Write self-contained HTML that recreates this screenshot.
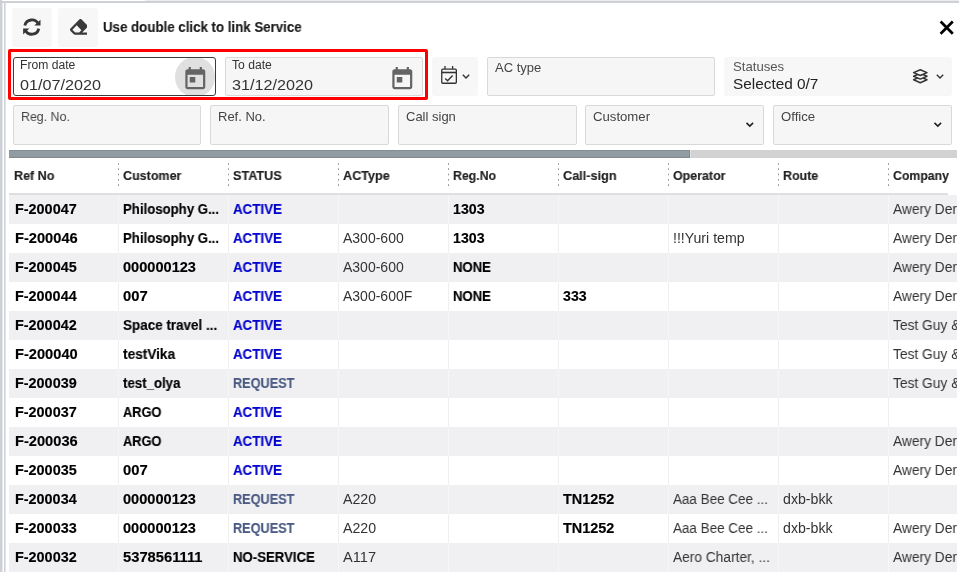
<!DOCTYPE html>
<html><head><meta charset="utf-8">
<style>
*{box-sizing:border-box;margin:0;padding:0}
html,body{width:959px;height:572px;overflow:hidden;background:#fff;font-family:"Liberation Sans",sans-serif;color:#222}
.a{position:absolute}
.t{position:absolute;white-space:nowrap;line-height:1;transform-origin:0 0;will-change:transform}
.btn{position:absolute;background:#f7f7f7;border-radius:3px}
.fld{position:absolute;background:#f6f6f6;border:1px solid #d9d9d9;border-radius:2px}
.row{position:absolute;left:9px;width:948px;height:29px}
.g{background:#f0f0f3}
.vl{position:absolute;top:195px;width:1px;height:377px;background:#f2f2f4}
.hd{position:absolute;top:163px;width:1px;height:23px;background-image:linear-gradient(#999 0,#999 2px,transparent 2px);background-size:1px 5.3px}
</style></head><body>
<div class="a" style="left:145px;top:0;width:814px;height:1px;background:#ececec"></div><div class="a" style="left:0;top:1px;width:959px;height:2px;background:#cdd1d6"></div>
<div class="a" style="left:0;top:0;width:2px;height:572px;background:#cdd1d6"></div><div class="a" style="left:2px;top:3px;width:1px;height:569px;background:#e6e8eb"></div>
<div class="a" style="left:4px;top:3px;width:1px;height:569px;background:#cfd3d7"></div><div class="a" style="left:5px;top:3px;width:1px;height:569px;background:#e0e3e6"></div>

<div class="btn" style="left:12px;top:8px;width:40px;height:39px"></div>
<div class="btn" style="left:58px;top:8px;width:40px;height:39px"></div>
<svg class="a" style="left:0;top:0" width="50" height="45" viewBox="0 0 50 45"><g fill="#363636"><path d="M24.82 25.57A7.15 7.15 0 0 1 38.28 24.08" fill="none" stroke="#363636" stroke-width="2.8"/><path d="M40.5 19.7L40.5 25.6L34.3 25.6Z"/><path d="M38.78 28.63A7.15 7.15 0 0 1 25.32 30.12" fill="none" stroke="#363636" stroke-width="2.8"/><path d="M23.1 34.5L23.1 28.6L29.3 28.6Z"/></g></svg>
<svg class="a" style="left:69.6px;top:19.1px" width="17.6" height="15.8" viewBox="0 0 512 446" preserveAspectRatio="none"><g transform="translate(0,-34)"><path fill="#3a3a3a" d="M497.941 273.941c18.745-18.745 18.745-49.137 0-67.882l-160-160c-18.745-18.745-49.136-18.746-67.883 0l-256 256c-18.745 18.745-18.745 49.137 0 67.882l96 96A48.004 48.004 0 0 0 144 480h356c6.627 0 12-5.373 12-12v-40c0-6.627-5.373-12-12-12H355.883l142.058-142.059zm-302.627-62.627l137.373 137.373L265.373 416H150.628l-80-80 124.686-124.686z"/></g></svg>
<svg class="a" style="left:938px;top:19px" width="18" height="18" viewBox="0 0 18 18"><path d="M2.6 2.55L14.8 14.75M14.8 2.55L2.6 14.75" stroke="#000" stroke-width="2.7"/></svg>

<div class="a" style="left:8px;top:49px;width:420px;height:51px;border:3px solid #ff0000;border-radius:2px"></div>
<div class="a" style="left:13px;top:57px;width:203px;height:39px;border:1px solid #3c3c3c;border-radius:3px;background:#fff;overflow:hidden">
  <div class="a" style="left:161px;top:-1px;width:40px;height:40px;border-radius:50%;background:#e0e0e0"></div>
</div>
<svg class="a" style="left:181.8px;top:65.9px" width="26.6" height="26.6" viewBox="0 0 24 24"><path fill="#646464" d="M19 3h-1V1h-2v2H8V1H6v2H5c-1.11 0-1.99.9-1.99 2L3 19c0 1.1.89 2 2 2h14c1.1 0 2-.9 2-2V5c0-1.1-.9-2-2-2zm0 16H5V8h14v11zM7 10h5v5H7z"/></svg>
<div class="fld" style="left:225px;top:57px;width:198px;height:39px"></div>
<svg class="a" style="left:388.7px;top:65.9px" width="26.6" height="26.6" viewBox="0 0 24 24"><path fill="#646464" d="M19 3h-1V1h-2v2H8V1H6v2H5c-1.11 0-1.99.9-1.99 2L3 19c0 1.1.89 2 2 2h14c1.1 0 2-.9 2-2V5c0-1.1-.9-2-2-2zm0 16H5V8h14v11zM7 10h5v5H7z"/></svg>
<div class="btn" style="left:432px;top:57px;width:46px;height:39px"></div>
<svg class="a" style="left:440px;top:65px" width="18" height="20" viewBox="0 0 18 20"><g fill="none" stroke="#333" stroke-width="1.3"><rect x="1.75" y="4.15" width="14.6" height="14.1" rx="1"/><path d="M1.5 7.5H16.5" stroke-width="1.6"/><path d="M5 1.1v3M12.6 1.1v3"/><path d="M5.2 13.4L7.6 15.7L12.6 10.6" stroke-width="1.4"/></g></svg>
<svg class="a" style="left:461px;top:73px" width="10" height="7" viewBox="0 0 10 7"><path d="M1.8 1.7L5 4.9L8.2 1.7" fill="none" stroke="#333" stroke-width="1.4"/></svg>
<div class="fld" style="left:487px;top:57px;width:228px;height:39px"></div>
<div class="btn" style="left:724px;top:57px;width:228px;height:39px"></div>
<svg class="a" style="left:905px;top:60px" width="45" height="32" viewBox="0 0 45 32"><g fill="#f7f7f7" stroke="#333" stroke-width="1.5" stroke-linejoin="round"><path d="M15.3 16.9L22 19.8L15.3 22.7L8.6 19.8Z"/><path d="M15.3 13.3L22 16.2L15.3 19.1L8.6 16.2Z"/><path d="M15.3 9.7L22 12.6L15.3 15.5L8.6 12.6Z"/></g></svg>
<svg class="a" style="left:935px;top:73px" width="10" height="7" viewBox="0 0 10 7"><path d="M1.8 1.7L5 4.9L8.2 1.7" fill="none" stroke="#333" stroke-width="1.4"/></svg>
<div class="fld" style="left:13px;top:105px;width:188px;height:40px"></div>
<div class="fld" style="left:210px;top:105px;width:179px;height:40px"></div>
<div class="fld" style="left:398px;top:105px;width:179px;height:40px"></div>
<div class="fld" style="left:585px;top:105px;width:179px;height:40px"></div>
<svg class="a" style="left:745px;top:121px" width="10" height="7" viewBox="0 0 10 7"><path d="M1.5 1.9L4.8 5.1L8.1 1.9" fill="none" stroke="#222" stroke-width="1.6"/></svg>
<div class="fld" style="left:773px;top:105px;width:179px;height:40px"></div>
<svg class="a" style="left:933px;top:121px" width="10" height="7" viewBox="0 0 10 7"><path d="M1.5 1.9L4.8 5.1L8.1 1.9" fill="none" stroke="#222" stroke-width="1.6"/></svg>
<div class="a" style="left:9px;top:150px;width:948px;height:8px;background:#d2d2d2"></div>
<div class="a" style="left:9px;top:150px;width:681px;height:8px;background:#909ba2;box-shadow:inset 0 1px 0 #838e95,inset 0 -1px 0 #7e8990,inset -1px 0 0 #818c93"></div><div class="a" style="left:690px;top:150px;width:1px;height:8px;background:#dedede"></div>
<div class="hd" style="left:118px"></div><div class="hd" style="left:228px"></div><div class="hd" style="left:338px"></div><div class="hd" style="left:448px"></div><div class="hd" style="left:558px"></div><div class="hd" style="left:668px"></div><div class="hd" style="left:778px"></div><div class="hd" style="left:888px"></div>
<div class="a" style="left:9px;top:193px;width:939px;height:2px;background:#dedede"></div>
<div class="row g" style="top:195px"></div><div class="row" style="top:224px"></div><div class="row g" style="top:253px"></div><div class="row" style="top:282px"></div><div class="row g" style="top:311px"></div><div class="row" style="top:340px"></div><div class="row g" style="top:369px"></div><div class="row" style="top:398px"></div><div class="row g" style="top:427px"></div><div class="row" style="top:456px"></div><div class="row g" style="top:485px"></div><div class="row" style="top:514px"></div><div class="row g" style="top:543px"></div>
<div class="a" style="left:118px;top:195px;width:1px;height:29px;background:#f6f6f8"></div><div class="a" style="left:228px;top:195px;width:1px;height:29px;background:#f6f6f8"></div><div class="a" style="left:338px;top:195px;width:1px;height:29px;background:#f6f6f8"></div><div class="a" style="left:448px;top:195px;width:1px;height:29px;background:#f6f6f8"></div><div class="a" style="left:558px;top:195px;width:1px;height:29px;background:#f6f6f8"></div><div class="a" style="left:668px;top:195px;width:1px;height:29px;background:#f6f6f8"></div><div class="a" style="left:778px;top:195px;width:1px;height:29px;background:#f6f6f8"></div><div class="a" style="left:888px;top:195px;width:1px;height:29px;background:#f6f6f8"></div><div class="a" style="left:118px;top:224px;width:1px;height:29px;background:#efeff0"></div><div class="a" style="left:228px;top:224px;width:1px;height:29px;background:#efeff0"></div><div class="a" style="left:338px;top:224px;width:1px;height:29px;background:#efeff0"></div><div class="a" style="left:448px;top:224px;width:1px;height:29px;background:#efeff0"></div><div class="a" style="left:558px;top:224px;width:1px;height:29px;background:#efeff0"></div><div class="a" style="left:668px;top:224px;width:1px;height:29px;background:#efeff0"></div><div class="a" style="left:778px;top:224px;width:1px;height:29px;background:#efeff0"></div><div class="a" style="left:888px;top:224px;width:1px;height:29px;background:#efeff0"></div><div class="a" style="left:118px;top:253px;width:1px;height:29px;background:#f6f6f8"></div><div class="a" style="left:228px;top:253px;width:1px;height:29px;background:#f6f6f8"></div><div class="a" style="left:338px;top:253px;width:1px;height:29px;background:#f6f6f8"></div><div class="a" style="left:448px;top:253px;width:1px;height:29px;background:#f6f6f8"></div><div class="a" style="left:558px;top:253px;width:1px;height:29px;background:#f6f6f8"></div><div class="a" style="left:668px;top:253px;width:1px;height:29px;background:#f6f6f8"></div><div class="a" style="left:778px;top:253px;width:1px;height:29px;background:#f6f6f8"></div><div class="a" style="left:888px;top:253px;width:1px;height:29px;background:#f6f6f8"></div><div class="a" style="left:118px;top:282px;width:1px;height:29px;background:#efeff0"></div><div class="a" style="left:228px;top:282px;width:1px;height:29px;background:#efeff0"></div><div class="a" style="left:338px;top:282px;width:1px;height:29px;background:#efeff0"></div><div class="a" style="left:448px;top:282px;width:1px;height:29px;background:#efeff0"></div><div class="a" style="left:558px;top:282px;width:1px;height:29px;background:#efeff0"></div><div class="a" style="left:668px;top:282px;width:1px;height:29px;background:#efeff0"></div><div class="a" style="left:778px;top:282px;width:1px;height:29px;background:#efeff0"></div><div class="a" style="left:888px;top:282px;width:1px;height:29px;background:#efeff0"></div><div class="a" style="left:118px;top:311px;width:1px;height:29px;background:#f6f6f8"></div><div class="a" style="left:228px;top:311px;width:1px;height:29px;background:#f6f6f8"></div><div class="a" style="left:338px;top:311px;width:1px;height:29px;background:#f6f6f8"></div><div class="a" style="left:448px;top:311px;width:1px;height:29px;background:#f6f6f8"></div><div class="a" style="left:558px;top:311px;width:1px;height:29px;background:#f6f6f8"></div><div class="a" style="left:668px;top:311px;width:1px;height:29px;background:#f6f6f8"></div><div class="a" style="left:778px;top:311px;width:1px;height:29px;background:#f6f6f8"></div><div class="a" style="left:888px;top:311px;width:1px;height:29px;background:#f6f6f8"></div><div class="a" style="left:118px;top:340px;width:1px;height:29px;background:#efeff0"></div><div class="a" style="left:228px;top:340px;width:1px;height:29px;background:#efeff0"></div><div class="a" style="left:338px;top:340px;width:1px;height:29px;background:#efeff0"></div><div class="a" style="left:448px;top:340px;width:1px;height:29px;background:#efeff0"></div><div class="a" style="left:558px;top:340px;width:1px;height:29px;background:#efeff0"></div><div class="a" style="left:668px;top:340px;width:1px;height:29px;background:#efeff0"></div><div class="a" style="left:778px;top:340px;width:1px;height:29px;background:#efeff0"></div><div class="a" style="left:888px;top:340px;width:1px;height:29px;background:#efeff0"></div><div class="a" style="left:118px;top:369px;width:1px;height:29px;background:#f6f6f8"></div><div class="a" style="left:228px;top:369px;width:1px;height:29px;background:#f6f6f8"></div><div class="a" style="left:338px;top:369px;width:1px;height:29px;background:#f6f6f8"></div><div class="a" style="left:448px;top:369px;width:1px;height:29px;background:#f6f6f8"></div><div class="a" style="left:558px;top:369px;width:1px;height:29px;background:#f6f6f8"></div><div class="a" style="left:668px;top:369px;width:1px;height:29px;background:#f6f6f8"></div><div class="a" style="left:778px;top:369px;width:1px;height:29px;background:#f6f6f8"></div><div class="a" style="left:888px;top:369px;width:1px;height:29px;background:#f6f6f8"></div><div class="a" style="left:118px;top:398px;width:1px;height:29px;background:#efeff0"></div><div class="a" style="left:228px;top:398px;width:1px;height:29px;background:#efeff0"></div><div class="a" style="left:338px;top:398px;width:1px;height:29px;background:#efeff0"></div><div class="a" style="left:448px;top:398px;width:1px;height:29px;background:#efeff0"></div><div class="a" style="left:558px;top:398px;width:1px;height:29px;background:#efeff0"></div><div class="a" style="left:668px;top:398px;width:1px;height:29px;background:#efeff0"></div><div class="a" style="left:778px;top:398px;width:1px;height:29px;background:#efeff0"></div><div class="a" style="left:888px;top:398px;width:1px;height:29px;background:#efeff0"></div><div class="a" style="left:118px;top:427px;width:1px;height:29px;background:#f6f6f8"></div><div class="a" style="left:228px;top:427px;width:1px;height:29px;background:#f6f6f8"></div><div class="a" style="left:338px;top:427px;width:1px;height:29px;background:#f6f6f8"></div><div class="a" style="left:448px;top:427px;width:1px;height:29px;background:#f6f6f8"></div><div class="a" style="left:558px;top:427px;width:1px;height:29px;background:#f6f6f8"></div><div class="a" style="left:668px;top:427px;width:1px;height:29px;background:#f6f6f8"></div><div class="a" style="left:778px;top:427px;width:1px;height:29px;background:#f6f6f8"></div><div class="a" style="left:888px;top:427px;width:1px;height:29px;background:#f6f6f8"></div><div class="a" style="left:118px;top:456px;width:1px;height:29px;background:#efeff0"></div><div class="a" style="left:228px;top:456px;width:1px;height:29px;background:#efeff0"></div><div class="a" style="left:338px;top:456px;width:1px;height:29px;background:#efeff0"></div><div class="a" style="left:448px;top:456px;width:1px;height:29px;background:#efeff0"></div><div class="a" style="left:558px;top:456px;width:1px;height:29px;background:#efeff0"></div><div class="a" style="left:668px;top:456px;width:1px;height:29px;background:#efeff0"></div><div class="a" style="left:778px;top:456px;width:1px;height:29px;background:#efeff0"></div><div class="a" style="left:888px;top:456px;width:1px;height:29px;background:#efeff0"></div><div class="a" style="left:118px;top:485px;width:1px;height:29px;background:#f6f6f8"></div><div class="a" style="left:228px;top:485px;width:1px;height:29px;background:#f6f6f8"></div><div class="a" style="left:338px;top:485px;width:1px;height:29px;background:#f6f6f8"></div><div class="a" style="left:448px;top:485px;width:1px;height:29px;background:#f6f6f8"></div><div class="a" style="left:558px;top:485px;width:1px;height:29px;background:#f6f6f8"></div><div class="a" style="left:668px;top:485px;width:1px;height:29px;background:#f6f6f8"></div><div class="a" style="left:778px;top:485px;width:1px;height:29px;background:#f6f6f8"></div><div class="a" style="left:888px;top:485px;width:1px;height:29px;background:#f6f6f8"></div><div class="a" style="left:118px;top:514px;width:1px;height:29px;background:#efeff0"></div><div class="a" style="left:228px;top:514px;width:1px;height:29px;background:#efeff0"></div><div class="a" style="left:338px;top:514px;width:1px;height:29px;background:#efeff0"></div><div class="a" style="left:448px;top:514px;width:1px;height:29px;background:#efeff0"></div><div class="a" style="left:558px;top:514px;width:1px;height:29px;background:#efeff0"></div><div class="a" style="left:668px;top:514px;width:1px;height:29px;background:#efeff0"></div><div class="a" style="left:778px;top:514px;width:1px;height:29px;background:#efeff0"></div><div class="a" style="left:888px;top:514px;width:1px;height:29px;background:#efeff0"></div><div class="a" style="left:118px;top:543px;width:1px;height:29px;background:#f6f6f8"></div><div class="a" style="left:228px;top:543px;width:1px;height:29px;background:#f6f6f8"></div><div class="a" style="left:338px;top:543px;width:1px;height:29px;background:#f6f6f8"></div><div class="a" style="left:448px;top:543px;width:1px;height:29px;background:#f6f6f8"></div><div class="a" style="left:558px;top:543px;width:1px;height:29px;background:#f6f6f8"></div><div class="a" style="left:668px;top:543px;width:1px;height:29px;background:#f6f6f8"></div><div class="a" style="left:778px;top:543px;width:1px;height:29px;background:#f6f6f8"></div><div class="a" style="left:888px;top:543px;width:1px;height:29px;background:#f6f6f8"></div>
<div class="t" style="left:103px;top:20px;font-size:14px;font-weight:700;color:#1a1a1a;transform:scaleX(0.9491);-webkit-text-stroke:0.15px #1a1a1a">Use double click to link Service</div>
<div class="t" style="left:20px;top:59px;font-size:12px;font-weight:400;color:#333;transform:scaleX(1.0120)">From date</div>
<div class="t" style="left:20px;top:77px;font-size:15px;font-weight:400;color:#333;transform:scaleX(1.0795)">01/07/2020</div>
<div class="t" style="left:232px;top:59px;font-size:12px;font-weight:400;color:#333;transform:scaleX(1.0120)">To date</div>
<div class="t" style="left:232px;top:77px;font-size:15px;font-weight:400;color:#333;transform:scaleX(1.0795)">31/12/2020</div>
<div class="t" style="left:495px;top:61px;font-size:13px;font-weight:400;color:#444;transform:scaleX(0.9900)">AC type</div>
<div class="t" style="left:733px;top:60px;font-size:13px;font-weight:400;color:#555;transform:scaleX(1.0120)">Statuses</div>
<div class="t" style="left:733px;top:76px;font-size:15px;font-weight:400;color:#222;transform:scaleX(1.0242)">Selected 0/7</div>
<div class="t" style="left:21px;top:110px;font-size:13px;font-weight:400;color:#444;transform:scaleX(0.9525)">Reg. No.</div>
<div class="t" style="left:218px;top:110px;font-size:13px;font-weight:400;color:#444;transform:scaleX(0.9905)">Ref. No.</div>
<div class="t" style="left:406px;top:110px;font-size:13px;font-weight:400;color:#444;transform:scaleX(0.9918)">Call sign</div>
<div class="t" style="left:593px;top:110px;font-size:13px;font-weight:400;color:#444;transform:scaleX(1.0120)">Customer</div>
<div class="t" style="left:781px;top:110px;font-size:13px;font-weight:400;color:#444;transform:scaleX(1.0120)">Office</div>
<div class="t" style="left:14px;top:169px;font-size:13px;font-weight:700;color:#222;transform:scaleX(0.9638);-webkit-text-stroke:0.15px #222">Ref No</div>
<div class="t" style="left:123px;top:169px;font-size:13px;font-weight:700;color:#222;transform:scaleX(0.9622);-webkit-text-stroke:0.15px #222">Customer</div>
<div class="t" style="left:233px;top:169px;font-size:13px;font-weight:700;color:#222;transform:scaleX(0.9715);-webkit-text-stroke:0.15px #222">STATUS</div>
<div class="t" style="left:343px;top:169px;font-size:13px;font-weight:700;color:#222;transform:scaleX(0.9698);-webkit-text-stroke:0.15px #222">ACType</div>
<div class="t" style="left:453px;top:169px;font-size:13px;font-weight:700;color:#222;transform:scaleX(0.9460);-webkit-text-stroke:0.15px #222">Reg.No</div>
<div class="t" style="left:563px;top:169px;font-size:13px;font-weight:700;color:#222;transform:scaleX(0.9752);-webkit-text-stroke:0.15px #222">Call-sign</div>
<div class="t" style="left:673px;top:169px;font-size:13px;font-weight:700;color:#222;transform:scaleX(0.9568);-webkit-text-stroke:0.15px #222">Operator</div>
<div class="t" style="left:783px;top:169px;font-size:13px;font-weight:700;color:#222;transform:scaleX(0.9573);-webkit-text-stroke:0.15px #222">Route</div>
<div class="t" style="left:893px;top:169px;font-size:13px;font-weight:700;color:#222;transform:scaleX(0.9445);-webkit-text-stroke:0.15px #222">Company</div>
<div class="t" style="left:15px;top:202px;font-size:14px;font-weight:700;color:#000;transform:scaleX(1.0289);-webkit-text-stroke:0.15px #000">F-200047</div>
<div class="t" style="left:123px;top:202px;font-size:14px;font-weight:700;color:#000;transform:scaleX(0.9425);-webkit-text-stroke:0.15px #000">Philosophy G...</div>
<div class="t" style="left:233px;top:202px;font-size:14px;font-weight:700;color:#0000cc;transform:scaleX(0.9536);-webkit-text-stroke:0.15px #0000cc">ACTIVE</div>
<div class="t" style="left:453px;top:202px;font-size:14px;font-weight:700;color:#000;transform:scaleX(1.0120);-webkit-text-stroke:0.15px #000">1303</div>
<div class="t" style="left:893px;top:202px;font-size:14px;font-weight:400;color:#333;transform:scaleX(0.9813)">Awery Der</div>
<div class="t" style="left:15px;top:231px;font-size:14px;font-weight:700;color:#000;transform:scaleX(1.0457);-webkit-text-stroke:0.15px #000">F-200046</div>
<div class="t" style="left:123px;top:231px;font-size:14px;font-weight:700;color:#000;transform:scaleX(0.9425);-webkit-text-stroke:0.15px #000">Philosophy G...</div>
<div class="t" style="left:233px;top:231px;font-size:14px;font-weight:700;color:#0000cc;transform:scaleX(0.9536);-webkit-text-stroke:0.15px #0000cc">ACTIVE</div>
<div class="t" style="left:343px;top:231px;font-size:14px;font-weight:400;color:#333;transform:scaleX(0.9954)">A300-600</div>
<div class="t" style="left:453px;top:231px;font-size:14px;font-weight:700;color:#000;transform:scaleX(1.0120);-webkit-text-stroke:0.15px #000">1303</div>
<div class="t" style="left:673px;top:231px;font-size:14px;font-weight:400;color:#333;transform:scaleX(1.0120)">!!!Yuri temp</div>
<div class="t" style="left:893px;top:231px;font-size:14px;font-weight:400;color:#333;transform:scaleX(0.9813)">Awery Der</div>
<div class="t" style="left:15px;top:260px;font-size:14px;font-weight:700;color:#000;transform:scaleX(1.0289);-webkit-text-stroke:0.15px #000">F-200045</div>
<div class="t" style="left:123px;top:260px;font-size:14px;font-weight:700;color:#000;transform:scaleX(1.0409);-webkit-text-stroke:0.15px #000">000000123</div>
<div class="t" style="left:233px;top:260px;font-size:14px;font-weight:700;color:#0000cc;transform:scaleX(0.9536);-webkit-text-stroke:0.15px #0000cc">ACTIVE</div>
<div class="t" style="left:343px;top:260px;font-size:14px;font-weight:400;color:#333;transform:scaleX(0.9954)">A300-600</div>
<div class="t" style="left:453px;top:260px;font-size:14px;font-weight:700;color:#000;transform:scaleX(0.9380);-webkit-text-stroke:0.15px #000">NONE</div>
<div class="t" style="left:893px;top:260px;font-size:14px;font-weight:400;color:#333;transform:scaleX(0.9813)">Awery Der</div>
<div class="t" style="left:15px;top:289px;font-size:14px;font-weight:700;color:#000;transform:scaleX(1.0286);-webkit-text-stroke:0.15px #000">F-200044</div>
<div class="t" style="left:123px;top:289px;font-size:14px;font-weight:700;color:#000;transform:scaleX(1.0560);-webkit-text-stroke:0.15px #000">007</div>
<div class="t" style="left:233px;top:289px;font-size:14px;font-weight:700;color:#0000cc;transform:scaleX(0.9536);-webkit-text-stroke:0.15px #0000cc">ACTIVE</div>
<div class="t" style="left:343px;top:289px;font-size:14px;font-weight:400;color:#333;transform:scaleX(0.9973)">A300-600F</div>
<div class="t" style="left:453px;top:289px;font-size:14px;font-weight:700;color:#000;transform:scaleX(0.9380);-webkit-text-stroke:0.15px #000">NONE</div>
<div class="t" style="left:563px;top:289px;font-size:14px;font-weight:700;color:#000;transform:scaleX(1.0120);-webkit-text-stroke:0.15px #000">333</div>
<div class="t" style="left:893px;top:289px;font-size:14px;font-weight:400;color:#333;transform:scaleX(0.9813)">Awery Der</div>
<div class="t" style="left:15px;top:318px;font-size:14px;font-weight:700;color:#000;transform:scaleX(1.0289);-webkit-text-stroke:0.15px #000">F-200042</div>
<div class="t" style="left:123px;top:318px;font-size:14px;font-weight:700;color:#000;transform:scaleX(0.9604);-webkit-text-stroke:0.15px #000">Space travel ...</div>
<div class="t" style="left:233px;top:318px;font-size:14px;font-weight:700;color:#0000cc;transform:scaleX(0.9536);-webkit-text-stroke:0.15px #0000cc">ACTIVE</div>
<div class="t" style="left:893px;top:318px;font-size:14px;font-weight:400;color:#333;transform:scaleX(0.9827)">Test Guy &amp;</div>
<div class="t" style="left:15px;top:347px;font-size:14px;font-weight:700;color:#000;transform:scaleX(1.0457);-webkit-text-stroke:0.15px #000">F-200040</div>
<div class="t" style="left:123px;top:347px;font-size:14px;font-weight:700;color:#000;transform:scaleX(0.9745);-webkit-text-stroke:0.15px #000">testVika</div>
<div class="t" style="left:233px;top:347px;font-size:14px;font-weight:700;color:#0000cc;transform:scaleX(0.9536);-webkit-text-stroke:0.15px #0000cc">ACTIVE</div>
<div class="t" style="left:893px;top:347px;font-size:14px;font-weight:400;color:#333;transform:scaleX(0.9827)">Test Guy &amp;</div>
<div class="t" style="left:15px;top:376px;font-size:14px;font-weight:700;color:#000;transform:scaleX(1.0289);-webkit-text-stroke:0.15px #000">F-200039</div>
<div class="t" style="left:123px;top:376px;font-size:14px;font-weight:700;color:#000;transform:scaleX(0.9456);-webkit-text-stroke:0.15px #000">test_olya</div>
<div class="t" style="left:233px;top:376px;font-size:14px;font-weight:700;color:#4a5a82;transform:scaleX(0.9078);-webkit-text-stroke:0.15px #4a5a82">REQUEST</div>
<div class="t" style="left:893px;top:376px;font-size:14px;font-weight:400;color:#333;transform:scaleX(0.9827)">Test Guy &amp;</div>
<div class="t" style="left:15px;top:405px;font-size:14px;font-weight:700;color:#000;transform:scaleX(1.0289);-webkit-text-stroke:0.15px #000">F-200037</div>
<div class="t" style="left:123px;top:405px;font-size:14px;font-weight:700;color:#000;transform:scaleX(0.9156);-webkit-text-stroke:0.15px #000">ARGO</div>
<div class="t" style="left:233px;top:405px;font-size:14px;font-weight:700;color:#0000cc;transform:scaleX(0.9536);-webkit-text-stroke:0.15px #0000cc">ACTIVE</div>
<div class="t" style="left:15px;top:434px;font-size:14px;font-weight:700;color:#000;transform:scaleX(1.0457);-webkit-text-stroke:0.15px #000">F-200036</div>
<div class="t" style="left:123px;top:434px;font-size:14px;font-weight:700;color:#000;transform:scaleX(0.9156);-webkit-text-stroke:0.15px #000">ARGO</div>
<div class="t" style="left:233px;top:434px;font-size:14px;font-weight:700;color:#0000cc;transform:scaleX(0.9536);-webkit-text-stroke:0.15px #0000cc">ACTIVE</div>
<div class="t" style="left:893px;top:434px;font-size:14px;font-weight:400;color:#333;transform:scaleX(0.9813)">Awery Der</div>
<div class="t" style="left:15px;top:463px;font-size:14px;font-weight:700;color:#000;transform:scaleX(1.0289);-webkit-text-stroke:0.15px #000">F-200035</div>
<div class="t" style="left:123px;top:463px;font-size:14px;font-weight:700;color:#000;transform:scaleX(1.0560);-webkit-text-stroke:0.15px #000">007</div>
<div class="t" style="left:233px;top:463px;font-size:14px;font-weight:700;color:#0000cc;transform:scaleX(0.9536);-webkit-text-stroke:0.15px #0000cc">ACTIVE</div>
<div class="t" style="left:893px;top:463px;font-size:14px;font-weight:400;color:#333;transform:scaleX(0.9813)">Awery Der</div>
<div class="t" style="left:15px;top:492px;font-size:14px;font-weight:700;color:#000;transform:scaleX(1.0286);-webkit-text-stroke:0.15px #000">F-200034</div>
<div class="t" style="left:123px;top:492px;font-size:14px;font-weight:700;color:#000;transform:scaleX(1.0409);-webkit-text-stroke:0.15px #000">000000123</div>
<div class="t" style="left:233px;top:492px;font-size:14px;font-weight:700;color:#4a5a82;transform:scaleX(0.9078);-webkit-text-stroke:0.15px #4a5a82">REQUEST</div>
<div class="t" style="left:343px;top:492px;font-size:14px;font-weight:400;color:#333;transform:scaleX(1.0120)">A220</div>
<div class="t" style="left:563px;top:492px;font-size:14px;font-weight:700;color:#000;transform:scaleX(1.0322);-webkit-text-stroke:0.15px #000">TN1252</div>
<div class="t" style="left:673px;top:492px;font-size:14px;font-weight:400;color:#333;transform:scaleX(0.9604)">Aaa Bee Cee ...</div>
<div class="t" style="left:783px;top:492px;font-size:14px;font-weight:400;color:#333;transform:scaleX(1.0120)">dxb-bkk</div>
<div class="t" style="left:15px;top:521px;font-size:14px;font-weight:700;color:#000;transform:scaleX(1.0289);-webkit-text-stroke:0.15px #000">F-200033</div>
<div class="t" style="left:123px;top:521px;font-size:14px;font-weight:700;color:#000;transform:scaleX(1.0409);-webkit-text-stroke:0.15px #000">000000123</div>
<div class="t" style="left:233px;top:521px;font-size:14px;font-weight:700;color:#4a5a82;transform:scaleX(0.9078);-webkit-text-stroke:0.15px #4a5a82">REQUEST</div>
<div class="t" style="left:343px;top:521px;font-size:14px;font-weight:400;color:#333;transform:scaleX(1.0120)">A220</div>
<div class="t" style="left:563px;top:521px;font-size:14px;font-weight:700;color:#000;transform:scaleX(1.0322);-webkit-text-stroke:0.15px #000">TN1252</div>
<div class="t" style="left:673px;top:521px;font-size:14px;font-weight:400;color:#333;transform:scaleX(0.9604)">Aaa Bee Cee ...</div>
<div class="t" style="left:783px;top:521px;font-size:14px;font-weight:400;color:#333;transform:scaleX(1.0120)">dxb-bkk</div>
<div class="t" style="left:893px;top:521px;font-size:14px;font-weight:400;color:#333;transform:scaleX(0.9813)">Awery Der</div>
<div class="t" style="left:15px;top:550px;font-size:14px;font-weight:700;color:#000;transform:scaleX(1.0289);-webkit-text-stroke:0.15px #000">F-200032</div>
<div class="t" style="left:123px;top:550px;font-size:14px;font-weight:700;color:#000;transform:scaleX(1.0519);-webkit-text-stroke:0.15px #000">5378561111</div>
<div class="t" style="left:233px;top:550px;font-size:14px;font-weight:700;color:#000;transform:scaleX(0.9422);-webkit-text-stroke:0.15px #000">NO-SERVICE</div>
<div class="t" style="left:343px;top:550px;font-size:14px;font-weight:400;color:#333;transform:scaleX(1.0436)">A117</div>
<div class="t" style="left:673px;top:550px;font-size:14px;font-weight:400;color:#333;transform:scaleX(0.9810)">Aero Charter, ...</div>
<div class="t" style="left:893px;top:550px;font-size:14px;font-weight:400;color:#333;transform:scaleX(0.9813)">Awery Der</div>
<div class="a" style="left:957px;top:150px;width:2px;height:422px;background:#fff"></div>
</body></html>
